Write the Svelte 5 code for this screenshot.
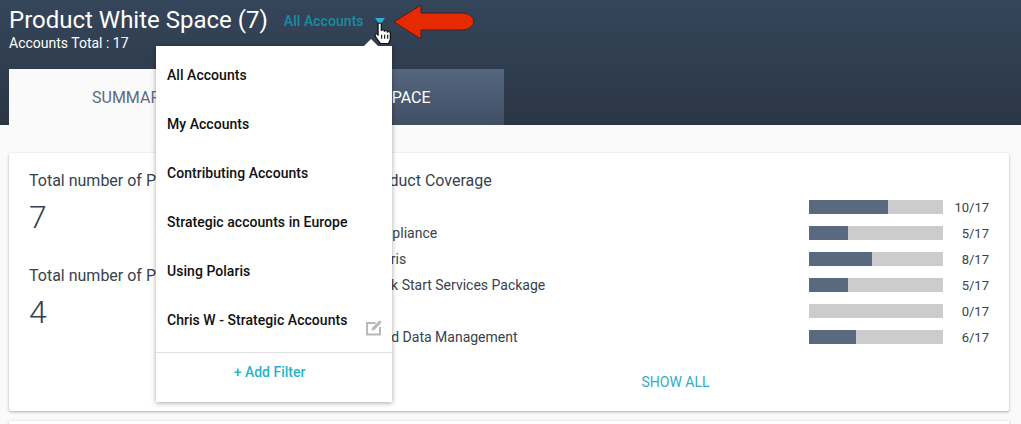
<script>
  const menu = ['All Accounts','My Accounts','Contributing Accounts','Strategic accounts in Europe','Using Polaris','Chris W - Strategic Accounts'];
  const rows = [
    ['API',10],['Compliance',5],['Polaris',8],['Quick Start Services Package',5],['Hub',0],['Cloud Data Management',6]
  ];
</script>

<div class="page">
  <header class="head">
    <div class="titlerow">
      <h1>Product White Space (7)</h1>
      <span class="filter">All Accounts</span>
      <span class="caret"></span>
    </div>
    <div class="total">Accounts Total : 17</div>
    <nav class="tabs">
      <div class="tab active">SUMMARY</div>
      <div class="tab other">WHITE SPACE</div>
    </nav>
  </header>

  <main class="body">
    <section class="card">
      <div class="left">
        <div class="stat">
          <div class="statlabel">Total number of Products</div>
          <div class="statnum">7</div>
        </div>
        <div class="stat">
          <div class="statlabel">Total number of Products</div>
          <div class="statnum">4</div>
        </div>
      </div>
      <div class="right">
        <h2>Product Coverage</h2>
        <div class="rows">
          {#each rows as r}
            <div class="row">
              <span class="name">{r[0]}</span>
              <span class="bar"><span class="fill" style="width:{(r[1] / 17) * 100}%"></span></span>
              <span class="val">{r[1]}/17</span>
            </div>
          {/each}
        </div>
        <div class="showall">SHOW ALL</div>
      </div>
    </section>
    <section class="card2"></section>
  </main>

  <div class="menu">
    <span class="notch"></span>
    <ul>
      {#each menu as m}
        <li>{m}</li>
      {/each}
    </ul>
    <svg class="edit" width="18" height="18" viewBox="0 0 18 18">
      <path d="M10.500 5H2v11.500h13V9" fill="none" stroke="#b8b8b8" stroke-width="2"/>
      <path d="M6.500 12.500l.6-2.800L14.600 2.200l2.200 2.200-7.500 7.500z" fill="#b8b8b8"/>
    </svg>
    <div class="add">+ Add Filter</div>
  </div>

  <svg class="arrow" width="82" height="36" viewBox="0 0 82 36">
    <path d="M1 18 L28 1 V9 H68 C85 9 85 26 68 26 H28 V35 Z" fill="#e62a00" stroke="#4a2020" stroke-width="1"/>
  </svg>
  <svg class="hand" width="18" height="22" viewBox="0 0 15.500 23.500" preserveAspectRatio="none">
    <path d="M3.500 2.200c0-1.600 2.800-1.600 2.800 0V9c0-1 2.600-1 2.600 0v1c0-1 2.600-1 2.600 0v1c0-1 2.600-.8 2.600.4V18c0 2-1 3-1.600 5H5.500C4.500 20.500 3 19 1.500 16 .6 14.200 .6 12.500 2 12.500c.8 0 1.100.8 1.500 1.700z" fill="#fff" stroke="#111" stroke-width="1.100" stroke-linejoin="round"/>
    <path d="M6.600 13.500V18M9.200 13.500V18M11.800 13.500V18" stroke="#111" stroke-width="1" fill="none"/>
  </svg>
</div>

<style>
  :global(body) { margin: 0; background: #fafafa; overflow: hidden; }
  .page {
    position: relative; width: 1021px; height: 424px; overflow: hidden;
    font-family: Roboto, sans-serif; background: #fafafa; color: #37424f;
  }
  .head {
    height: 125px; box-sizing: border-box; padding: 5px 9px 0;
    background: linear-gradient(180deg, #35455a 0%, #2b3645 100%);
    display: flex; flex-direction: column; color: #fff;
  }
  .titlerow { display: flex; align-items: center; height: 31px; }
  h1 { margin: 0; font-size: 24px; font-weight: 400; line-height: 31px; }
  .filter { margin-left: 16px; font-size: 14px; font-weight: 500; color: #168ea3; letter-spacing: .05px; }
  .caret {
    margin-left: 11px; width: 0; height: 0; margin-top: 2px;
    border-left: 5px solid transparent; border-right: 5px solid transparent; border-top: 7px solid #27b5cc;
  }
  .total { font-size: 14px; line-height: 15px; }
  .tabs { display: flex; margin-top: auto; height: 56px; }
  .tab {
    width: 247.5px; box-sizing: border-box; display: flex; align-items: center; justify-content: center;
    font-size: 16px;
  }
  .active { background: #fafafa; color: #5b6a80; padding-right: 4px; }
  .other { background: linear-gradient(180deg, #54667f 0%, #414f64 100%); color: #fff; }
  .body { padding: 28px 12px 0 9px; }
  .card {
    height: 258px; box-sizing: border-box; background: #fff; display: grid; grid-template-columns: 334px 1fr;
    padding: 18px 20px 0; box-shadow: 0 1px 3px rgba(0,0,0,.3); border-radius: 2px;
  }
  .stat { height: 95px; }
  .statlabel { font-size: 16px; line-height: 19px; }
  .statnum { font-size: 32px; line-height: 38px; font-weight: 300; margin-top: 8px; }
  h2 { margin: 0 0 0 2px; font-size: 16px; font-weight: 400; line-height: 19px; }
  .rows { margin-top: 4px; }
  .row { display: flex; align-items: center; height: 26px; font-size: 14px; }
  .name { width: 446px; }
  .bar { width: 134px; height: 14px; background: #cccccc; display: block; }
  .fill { display: block; height: 100%; background: #59697f; }
  .val { width: 46px; text-align: right; font-size: 13px; }
  .showall { margin-top: 24px; text-align: center; font-size: 14px; color: #2eaec6; width: 625px; }
  .card2 { margin-top: 10px; height: 20px; background: #fff; box-shadow: 0 1px 3px rgba(0,0,0,.3); }
  .menu {
    position: absolute; left: 156px; top: 46px; width: 236px; height: 356px; background: #fff;
    box-shadow: 0 1px 5px rgba(0,0,0,.35); display: flex; flex-direction: column;
  }
  .notch {
    position: absolute; left: 210px; top: -5px; width: 10px; height: 10px; background: #fff; transform: rotate(45deg);
  }
  ul { margin: 0; padding: 5px 0 0; list-style: none; height: 307px; box-sizing: border-box; border-bottom: 1px solid #e0e0e0; position: relative; }
  li { height: 49px; line-height: 49px; padding-left: 11px; font-size: 14px; font-weight: 500; color: #111; letter-spacing: .04px; }
  .edit { position: absolute; left: 209px; top: 272px; }
  .add { text-align: center; font-size: 14px; font-weight: 500; color: #27b3cc; margin-top: 11px; line-height: 17px; padding-right: 9px; }
  .arrow { position: absolute; left: 393px; top: 4px; }
  .hand { position: absolute; left: 374px; top: 22px; }
</style>
